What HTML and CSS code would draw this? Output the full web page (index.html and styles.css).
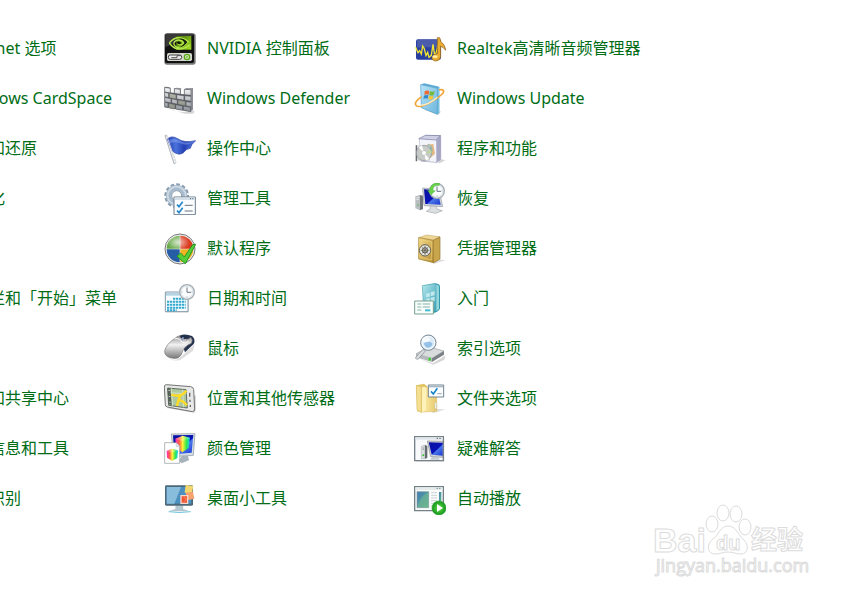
FILE: index.html
```html
<!DOCTYPE html>
<html lang="zh-CN">
<head>
<meta charset="utf-8">
<meta name="viewport" content="width=device-width, initial-scale=1">
<title>控制面板</title>
<link rel="stylesheet" href="styles.css">
</head>
<body>
<svg class="defs" aria-hidden="true">
  <defs>
    <linearGradient id="lime" x1="0" y1="0" x2="1" y2="1"><stop offset="0" stop-color="#416b08"/><stop offset="1" stop-color="#a5e322"/></linearGradient>
    <linearGradient id="metal" x1="0" y1="0" x2="0" y2="1"><stop offset="0" stop-color="#f6f6f8"/><stop offset="1" stop-color="#8b8e96"/></linearGradient>
    <linearGradient id="mouse" x1="0" y1="0" x2="0" y2="1"><stop offset="0" stop-color="#909090"/><stop offset=".4" stop-color="#f2f2f2"/><stop offset="1" stop-color="#777"/></linearGradient>
    <linearGradient id="flag" x1="0" y1="0" x2="1" y2="0"><stop offset="0" stop-color="#263fae"/><stop offset=".3" stop-color="#4a72dc"/><stop offset=".6" stop-color="#2340b4"/><stop offset="1" stop-color="#5c83e5"/></linearGradient>
    <linearGradient id="screen" x1="0" y1="0" x2="1" y2="1"><stop offset="0" stop-color="#0a12a0"/><stop offset=".55" stop-color="#0812b5"/><stop offset=".6" stop-color="#4b77ea"/><stop offset="1" stop-color="#1835cf"/></linearGradient>
    <linearGradient id="sky" x1="0" y1="0" x2="1" y2="1"><stop offset="0" stop-color="#b9e4f7"/><stop offset="1" stop-color="#6db6de"/></linearGradient>
    <linearGradient id="teal" x1="0" y1="0" x2="1" y2="1"><stop offset="0" stop-color="#b6e8ee"/><stop offset="1" stop-color="#3aa1b5"/></linearGradient>
    <linearGradient id="gold" x1="0" y1="0" x2="1" y2="1"><stop offset="0" stop-color="#f4dd91"/><stop offset="1" stop-color="#b58c32"/></linearGradient>
    <linearGradient id="folder" x1="0" y1="0" x2="1" y2="0"><stop offset="0" stop-color="#fff0b1"/><stop offset="1" stop-color="#e6c96a"/></linearGradient>
    <linearGradient id="picture" x1="0" y1="0" x2="1" y2="1"><stop offset="0" stop-color="#447bb7"/><stop offset="1" stop-color="#5ab58a"/></linearGradient>
    <linearGradient id="rainbow" x1="0" y1="0" x2="1" y2="0"><stop offset="0" stop-color="#ff31c6"/><stop offset=".25" stop-color="#ff5c42"/><stop offset=".5" stop-color="#fff337"/><stop offset=".75" stop-color="#35e94c"/><stop offset="1" stop-color="#14c9f3"/></linearGradient>
    <radialGradient id="shine"><stop offset="0" stop-color="#fff" stop-opacity=".75"/><stop offset="1" stop-color="#fff" stop-opacity="0"/></radialGradient>
    <radialGradient id="play"><stop offset="0" stop-color="#65df49"/><stop offset="1" stop-color="#13951c"/></radialGradient>
    <g id="clock"><circle r="22" fill="#e9eef1" stroke="#a6afb5" stroke-width="4"/><circle r="17" fill="#fafcfd" stroke="#c8d0d4"/><path d="M0-13V1H12" fill="none" stroke="#687681" stroke-width="3"/><path d="M0-16v3M0 13v3M-16 0h3M13 0h3" stroke="#94a2ab" stroke-width="2"/></g>
    <g id="winflag"><path d="M0 3q7-5 14-1l-2 11q-7-3-13 1z" fill="#ed6a35"/><path d="M16 3q8 3 14-1l-3 12q-6 3-13 0z" fill="#78b83a"/><path d="M-2 16q7-4 13-1l-2 10q-7-3-13 1z" fill="#2e88ce"/><path d="M13 16q7 3 13 0l-2 10q-6 3-13 0z" fill="#f8c62e"/></g>
  </defs>
</svg>

<main class="panel">
  <ul class="column clipped">
    <li><a href="#">rnet 选项</a></li>
    <li><a href="#">dows CardSpace</a></li>
    <li><a href="#">和还原</a></li>
    <li><a href="#">化</a></li>
    <li></li>
    <li><a href="#">栏和「开始」菜单</a></li>
    <li></li>
    <li><a href="#">和共享中心</a></li>
    <li><a href="#">信息和工具</a></li>
    <li><a href="#">识别</a></li>
  </ul>

  <ul class="column">
    <li><a href="#">
      <svg class="icon" viewBox="0 0 96 96"><rect x="1" y="1" width="94" height="94" rx="8" fill="#777"/><rect x="3" y="2" width="87" height="88" rx="5" fill="#111"/><path d="M4 6q0-4 5-4h75q5 0 5 4L60 17 4 43z" fill="#555" opacity=".6"/><path d="M37 9h45v41H37z" fill="url(#lime)"/><g fill="none" stroke="#b6e94d" stroke-width="4"><path d="M16 30Q40 1 73 26 50 53 34 40 24 29 37 22 53 18 59 30 49 40 42 32"/><path d="M16 30q13 19 32 18 18-2 29-13"/></g><path d="M38 19q20-8 32 9-11 14-25 16 18-10 16-17-8-11-23-8z" fill="#14200a"/><path d="M38 28q8-6 14 2-7 8-14-2z" fill="#101808"/><rect x="9" y="60" width="75" height="24" rx="5" fill="#d6d8d0"/><rect x="13" y="66" width="40" height="13" rx="6" fill="#eee" stroke="#444" stroke-width="3"/><path d="M22 74h17v-6h11" fill="none" stroke="#555" stroke-width="3"/><circle cx="69" cy="72" r="8" fill="#e8f5cb" stroke="#54a817" stroke-width="4"/><path d="M69 68v8m-4-4h8" stroke="#54a817" stroke-width="2"/></svg>
      <span>NVIDIA 控制面板</span></a></li>
    <li><a href="#">
      <svg class="icon" viewBox="0 0 96 96"><path d="M4 75q50 20 87 7l-1 9q-22 5-42-3z" fill="#bbb" opacity=".6"/><path d="M2 12l5-1 12 3v14l12 2V16l19 2v15l12 1V18l25-2v63l-10 6L2 73z" fill="#585c62"/><g fill="url(#metal)" stroke="#54595f" stroke-width="2"><path d="M2 13l17 3v14L2 27zM31 17l18 2v15l-18-3zM61 19l20 1v17l-20-2zM2 28l12 3v13L2 41zM16 31l20 4v13l-20-4zM38 35l22 3v14l-22-4zM62 38l19 2v15l-19-3zM2 43l19 4v13L2 56zM23 47l17 4v13l-17-4zM42 51l22 4v13l-22-4zM66 56l16 2v14l-16-3zM2 58l10 2v13L2 71zM14 61l19 4v13l-19-4zM35 65l21 4v13l-21-4zM58 69l22 4v13l-22-4z"/></g><path d="M16 31l20 4v13l-20-4zM42 51l22 4v13l-22-4zM14 61l19 4v13l-19-4z" fill="#858a70" opacity=".5"/><path d="M81 20l6-3v62l-5 7zM31 17l6-3 16 2-4 3zM61 19l6-4 20 2-6 3z" fill="#8d9197"/></svg>
      <span>Windows Defender</span></a></li>
    <li><a href="#">
      <svg class="icon" viewBox="0 0 96 96"><path d="M3 8l5-2 28 83-6 3z" fill="#eee" stroke="#8a929c" stroke-width="2"/><path d="M10 18Q23 6 41 17 60 31 95 23 80 35 79 46 68 46 57 60 42 69 25 54z" fill="url(#flag)" stroke="#243b9f" stroke-width="2"/><path d="M14 22q15-9 30 0 21 12 42 5-15 11-29 7-23-11-40-2z" fill="#a7c3ff" opacity=".35"/><path d="M8 7l28 83" stroke="#fff" stroke-width="2"/></svg>
      <span>操作中心</span></a></li>
    <li><a href="#">
      <svg class="icon" viewBox="0 0 96 96"><circle cx="38" cy="38" r="31" fill="none" stroke="#879bae" stroke-width="12" stroke-dasharray="10 6"/><circle cx="38" cy="38" r="24" fill="none" stroke="#a9bccd" stroke-width="16"/><circle cx="38" cy="38" r="27" fill="none" stroke="#cfdbe5" stroke-width="5"/><circle cx="38" cy="38" r="15" fill="#fff" stroke="#8297ab" stroke-width="3"/><path d="M30 42h64v53H30z" fill="#fbfdff" stroke="#6d7c8b" stroke-width="3"/><path d="M32 43h60v8H32z" fill="#d4dfe7"/><path d="M78 47h3m4 0h3" stroke="#445f80" stroke-width="3"/><path d="M39 65l6 6 11-15M39 83l6 6 11-15" fill="none" stroke="#2687c8" stroke-width="5"/><path d="M62 67h24M62 84h24" stroke="#69757e" stroke-width="3"/></svg>
      <span>管理工具</span></a></li>
    <li><a href="#">
      <svg class="icon" viewBox="0 0 96 96"><circle cx="48" cy="48" r="45" fill="#eee" stroke="#777" stroke-width="3"/><path d="M47 47V8A39 39 0 0 0 8 47z" fill="#64a744"/><path d="M49 8v39h39A39 39 0 0 0 49 8z" fill="#db3c20"/><path d="M8 49h39v39A39 39 0 0 1 8 49z" fill="#275da5"/><path d="M49 49h39a39 39 0 0 1-39 39z" fill="#f1b223"/><ellipse cx="42" cy="28" rx="34" ry="24" fill="url(#shine)"/><path d="M39 70l11-10 11 12 25-37 9-1-31 58z" fill="#54ce38" stroke="#249923" stroke-width="3"/></svg>
      <span>默认程序</span></a></li>
    <li><a href="#">
      <svg class="icon" viewBox="0 0 96 96"><path d="M6 29h68v59H6z" fill="#ccc"/><path d="M4 27h68v59H4z" fill="#fafdff" stroke="#8498a8" stroke-width="3"/><path d="M6 29h64v9H6z" fill="#b3d2e2"/><g stroke="#33a9cd" stroke-width="6" stroke-dasharray="7 2"><path d="M27 47h38M9 56h56M9 65h56M9 74h56M9 82h29"/></g><use href="#clock" x="69" y="27"/></svg>
      <span>日期和时间</span></a></li>
    <li><a href="#">
      <svg class="icon" viewBox="0 0 96 96"><path d="M6 62q18 26 38 15l48-43-5 19-38 28Q19 89 6 62z" fill="#aaa" opacity=".4"/><path d="M46 8Q63 0 84 9q12 10 5 24L63 58z" fill="#26334f"/><path d="M2 53Q7 34 31 17 42 7 52 8q10 3 14 11 10 0 14-6 8 8 2 18Q58 40 52 65 43 79 28 76 0 72 2 53z" fill="url(#mouse)" stroke="#777" stroke-width="2"/><path d="M32 17q17-2 22 10 8 8 20-2" fill="none" stroke="#fff" stroke-width="3"/><path d="M53 7q9 0 15 8l-7 4q-9-3-14-8z" fill="#202b44"/><path d="M51 20l5-9 5 3-6 9z" fill="#8198bd"/></svg>
      <span>鼠标</span></a></li>
    <li><a href="#">
      <svg class="icon" viewBox="0 0 96 96"><path d="M8 75l83 14 4-9V37z" fill="#aaa" opacity=".6"/><path d="M7 5l73 6q8 1 9 9l3 58q0 8-7 8L10 72q-6-1-6-7L1 12q0-7 6-7z" fill="#e7e8e7" stroke="#707372" stroke-width="3"/><path d="M11 15l55 5 4 55-56-8z" fill="#aec8a2" stroke="#5f6d5d" stroke-width="3"/><path d="M12 29l55 3M22 16l4 52M56 20l3 53" stroke="#d6e3c8" stroke-width="3"/><path d="M22 35q30 10 45-12M50 36q-8 13-11 33M42 51q13 0 27 16" fill="none" stroke="#ffdc23" stroke-width="7"/><path d="M10 15l9 1 4 50-9-2z" fill="#536054"/><path d="M13 22l5 1m-4 17l5 1m-4 16l5 1" stroke="#fff" stroke-width="2"/><path d="M77 29v12M78 50v7m1 9v6" stroke="#666" stroke-width="4"/></svg>
      <span>位置和其他传感器</span></a></li>
    <li><a href="#">
      <svg class="icon" viewBox="0 0 96 96"><path d="M22 3l71-1-5 65-59 4z" fill="#d6dfe6" stroke="#89919a" stroke-width="2"/><path d="M27 7l61-1-5 53-52 5z" fill="url(#screen)"/><path d="M54 68h18l3 14-22 9-9-8z" fill="#a9b3bb"/><path d="M34 17l22-9 22 6-4 31-19 13-19-14z" fill="url(#rainbow)"/><path d="M34 17l22-9 22 6-22 11z" fill="#fff" opacity=".25"/><path d="M2 29h35l10 11v51H2z" fill="#fff" stroke="#8e969b" stroke-width="2"/><path d="M37 29v12h10" fill="#e1e6e9" stroke="#9ba2a6"/><path d="M8 53l17-6 17 5-2 23-15 9-16-10z" fill="url(#rainbow)"/><path d="M8 53l17-6 17 5-17 8z" fill="#fff" opacity=".25"/></svg>
      <span>颜色管理</span></a></li>
    <li><a href="#">
      <svg class="icon" viewBox="0 0 96 96"><path d="M35 68h22v11l15 5H19l16-6z" fill="#b4c8d2" stroke="#a9b9c2"/><path d="M14 86q30 5 66 0" fill="none" stroke="#6cc3dc" stroke-width="3"/><rect x="3" y="7" width="84" height="61" rx="4" fill="#4c6878"/><path d="M8 12h74v50H8z" fill="#4c90c0"/><path d="M8 12h43L31 62H8z" fill="#88bddc"/><path d="M65 6l23 3-4 22-22-2z" fill="#f2d76e"/><path d="M65 29l22-3 4 21-21 5z" fill="#f5a26f"/><path d="M51 38h20v23H51z" fill="#ef5631" stroke="#f5d8ce" stroke-width="4"/><path d="M59 43l9 5-8 8" fill="none" stroke="#ffa080" stroke-width="2"/></svg>
      <span>桌面小工具</span></a></li>
  </ul>

  <ul class="column">
    <li><a href="#">
      <svg class="icon" viewBox="0 0 96 96"><rect x="6" y="19" width="75" height="61" rx="6" fill="#293f9f"/><path d="M9 20h67v23H9z" fill="#6170b4" opacity=".6"/><path d="M5 43l7 16 5-6 5 10 4-24 5 8 5 21 5-10 4 15 7-6 5-33 5 33 5-9 5-24 5 30" fill="none" stroke="#f4e62d" stroke-width="4"/><path d="M70 14h7l4 12q13 9 14 26-7-10-15-12v31q-2 12-14 13-14-1-12-11 3-10 16-11z" fill="#e9ac30" stroke="#8a5a18" stroke-width="2"/><ellipse cx="63" cy="71" rx="8" ry="4" fill="#fff0a3"/></svg>
      <span>Realtek高清晰音频管理器</span></a></li>
    <li><a href="#">
      <svg class="icon" viewBox="0 0 96 96"><path d="M28 80l53 5-6 10z" fill="#aaa" opacity=".4"/><path d="M20 5l10-4 46 10v78l-6 6-48-21z" fill="#5aa9d2"/><path d="M20 5l50 11v77L22 74z" fill="url(#sky)" stroke="#63abd0" stroke-width="2"/><path d="M75 13v76" stroke="#a4d8ee" stroke-width="3"/><g transform="translate(32 22)"><use href="#winflag"/></g><path d="M23 41Q-3 59 7 68q15 8 52-16 35-22 29-29-3-5-13-2" fill="none" stroke="#f3a438" stroke-width="5"/><path d="M10 67q30 3 60-24" fill="none" stroke="#fff2cc" stroke-width="4"/></svg>
      <span>Windows Update</span></a></li>
    <li><a href="#">
      <svg class="icon" viewBox="0 0 96 96"><path d="M76 77l18 5-20 10z" fill="#aaa" opacity=".5"/><path d="M17 18l20-11 43 1v70l-10 10-50-4z" fill="#c8c9df" stroke="#8585aa" stroke-width="2"/><path d="M17 18l50 4v65l-50-4z" fill="#f3f3fa"/><path d="M67 22L78 9v70L68 88z" fill="#a5a6c4"/><path d="M14 17l20-10 45 1-14 13z" fill="#cfcfe6" stroke="#8183a4" stroke-width="2"/><path d="M38 35l20-2 5 29-18 16z" fill="#e7b780"/><path d="M41 36q16 7 7 29" fill="none" stroke="#90b9ab" stroke-width="9"/><rect x="6" y="37" width="42" height="46" fill="#caceca" opacity=".8"/><path d="M7 37v48" stroke="#676971" stroke-width="4"/><circle cx="30" cy="60" r="23" fill="#c6cbc7" stroke="#8c8f9c" stroke-width="2"/><path d="M30 60L14 43l10-6zM30 60l16 17-10 6z" fill="#fff"/><path d="M30 60l22-10 1 11z" fill="#bbd59b"/><circle cx="30" cy="60" r="7" fill="#fff" stroke="#999"/></svg>
      <span>程序和功能</span></a></li>
    <li><a href="#">
      <svg class="icon" viewBox="0 0 96 96"><path d="M4 40l14-4v46l-14-6z" fill="#b8bdc1"/><path d="M18 36l9 2v40l-9 4z" fill="#70767b"/><path d="M7 45l8-2M7 50l8-2" stroke="#fff" stroke-width="2"/><circle cx="12" cy="66" r="2" fill="#35bb34"/><path d="M26 15l49 4 11 52-56-3z" fill="#d3d7db" stroke="#929aa1" stroke-width="2"/><path d="M30 19l41 3 9 43-46-2z" fill="url(#screen)"/><path d="M48 69l18 1 4 9 15 4-20 8-28-6 12-8z" fill="#dcdfe1" stroke="#a1a8ad" stroke-width="2"/><use href="#clock" x="69" y="24"/><path d="M47 24q0-25 29-24v7q-20-2-19 16h7L51 35 40 22z" fill="#69d349" stroke="#2e9e2a"/></svg>
      <span>恢复</span></a></li>
    <li><a href="#">
      <svg class="icon" viewBox="0 0 96 96"><path d="M53 76l42 6-35 10z" fill="#bbb" opacity=".5"/><path d="M14 14l23-8 41 5-20 10z" fill="#efd895" stroke="#987727"/><path d="M14 14l44 8v67l-44-11z" fill="url(#gold)" stroke="#a27e2a" stroke-width="2"/><path d="M58 22l20-10v66L58 90z" fill="#c9a64c" stroke="#94722a" stroke-width="2"/><path d="M18 20l35 7v54l-35-8z" fill="none" stroke="#efcf70" stroke-width="2"/><circle cx="33" cy="52" r="17" fill="#e6e6e2" stroke="#696656" stroke-width="3"/><circle cx="33" cy="52" r="8" fill="#c9c8be" stroke="#5f5c4b" stroke-width="3"/><path d="M33 38v28M20 52h26M23 42l20 20M43 42L23 62" stroke="#5c5a4e" stroke-width="2"/></svg>
      <span>凭据管理器</span></a></li>
    <li><a href="#">
      <svg class="icon" viewBox="0 0 96 96"><path d="M28 8l35-7 10 2q5 2 5 8v66q-4 8-15 12l-25 3z" fill="#2f9bac"/><path d="M25 8l35-6q6 0 7 5v75l-38 2z" fill="url(#teal)" stroke="#54a8b3" stroke-width="2"/><path d="M67 5q8-1 8 7v66l-8 6" fill="#94d6dc"/><path d="M37 32l10-3v12l-10 2zM50 28l12-4v13l-12 3zM37 47l10-2v12l-10 1zM50 44l12-3v13l-12 2z" fill="#e3fafa" opacity=".7"/><path d="M2 54h56v39H2z" fill="#f8fffb" stroke="#7b9e91" stroke-width="3"/><path d="M10 63h12M26 63h23M10 72h12M26 72h22M10 81h12" stroke="#86aeaa" stroke-width="3"/><path d="M33 79h16v6H33z" fill="#43bad3"/></svg>
      <span>入门</span></a></li>
    <li><a href="#">
      <svg class="icon" viewBox="0 0 96 96"><path d="M12 75l45 16 38-24-4 13-33 15z" fill="#999" opacity=".4"/><path d="M6 62l40-20 44 12-36 22z" fill="#d9dcdd" stroke="#9ea4a9" stroke-width="2"/><path d="M6 62l48 14v11L6 73z" fill="#b4babc"/><path d="M54 76l36-22v11L54 87z" fill="#7b8286"/><path d="M47 74v9" stroke="#36d529" stroke-width="7"/><path d="M27 49l6 6-19 22q-8 5-9-4z" fill="#d9dde0" stroke="#777f86" stroke-width="2"/><circle cx="43" cy="29" r="23" fill="#c2def3" stroke="#7b8790" stroke-width="3"/><circle cx="43" cy="29" r="19" fill="#dbecf8" stroke="#fff" stroke-width="3"/><path d="M29 32q12-16 27 0-7 16-20 11z" fill="#94bfe6"/><ellipse cx="36" cy="20" rx="12" ry="8" fill="#fff" opacity=".75"/></svg>
      <span>索引选项</span></a></li>
    <li><a href="#">
      <svg class="icon" viewBox="0 0 96 96"><path d="M48 77l46 2-37 12z" fill="#bbb" opacity=".5"/><path d="M7 7l23-5 9 7v72l-29 5z" fill="#e3c462"/><path d="M22 10l46 5v70l-46 2z" fill="url(#folder)" stroke="#dcc06a" stroke-width="2"/><path d="M7 7l15 5v77L9 80z" fill="#f5df91" stroke="#d8bc62" stroke-width="2"/><path d="M25 15l11-2v67l-12 8z" fill="#fff2b9"/><path d="M62 61q3-7 6 0v15l-6 3z" fill="#edf6f6" stroke="#b79f55"/><path d="M43 6h46v36H43z" fill="#fbfdfe" stroke="#718390" stroke-width="3"/><path d="M44 11h44" stroke="#a4b9c7" stroke-width="4"/><path d="M51 25l7 8 12-17" fill="none" stroke="#1785c7" stroke-width="5"/><path d="M70 32h13" stroke="#96a3ad" stroke-width="3"/></svg>
      <span>文件夹选项</span></a></li>
    <li><a href="#">
      <svg class="icon" viewBox="0 0 96 96"><path d="M6 14h85v72H6z" fill="#bbb" opacity=".5"/><path d="M2 11h86v72H2z" fill="#f9fafb" stroke="#77818a" stroke-width="4"/><path d="M4 13h82v7H4z" fill="#dfe5e9"/><path d="M68 16h4m4 0h4" stroke="#506073" stroke-width="3"/><path d="M22 40l11-4v41H22z" fill="#dce0e2" stroke="#7b8286"/><path d="M33 36l7 3v36l-7 2z" fill="#646b70"/><path d="M26 45h4M26 49h4" stroke="#777" stroke-width="2"/><circle cx="28" cy="67" r="3" fill="#32c02d"/><path d="M40 24l46 1v48l-36-2z" fill="#d0d7dc" stroke="#888" stroke-width="2"/><path d="M44 28l42 1v39l-33-3z" fill="url(#screen)"/><path d="M54 72l20 1 3 7H48z" fill="#c4cbcf"/></svg>
      <span>疑难解答</span></a></li>
    <li><a href="#">
      <svg class="icon" viewBox="0 0 96 96"><path d="M2 11h86v72H2z" fill="#fafcfc" stroke="#757f86" stroke-width="4"/><path d="M4 13h82v8H4z" fill="#e5eaeb"/><path d="M68 16h3m5 0h3" stroke="#526572" stroke-width="3"/><path d="M9 26h35v48H9z" fill="url(#picture)" stroke="#879aa0" stroke-width="2"/><path d="M10 70Q19 38 43 27v46H10z" fill="#7bbd8e" opacity=".5"/><path d="M51 29h18M51 37h18M51 45h18M51 53h18M51 61h11M51 69h8" stroke="#b6bdbd" stroke-width="2"/><path d="M75 27h7v27h-7z" fill="url(#picture)"/><circle cx="75" cy="75" r="21" fill="url(#play)" stroke="#259e2a" stroke-width="2"/><path d="M69 63l18 12-18 12z" fill="#fff"/></svg>
      <span>自动播放</span></a></li>
  </ul>
</main>

<svg class="watermark" viewBox="0 0 156 76" role="img" aria-label="Baidu 经验">
  <g class="outline">
    <ellipse cx="59" cy="23" rx="6" ry="8"/>
    <ellipse cx="70" cy="12" rx="6" ry="8"/>
    <ellipse cx="83" cy="13" rx="6" ry="8"/>
    <ellipse cx="92" cy="26" rx="6" ry="8"/>
    <path d="M75 25c8 0 10 9 15 13 7 6 5 15-2 15-5 0-8-2-13-2s-8 2-13 2c-8 0-9-10-2-15 6-4 7-13 15-13z"/>
    <text class="bai" x="0" y="51">Bai</text>
    <text class="du" x="63" y="49">du</text>
    <text class="cjk" x="98" y="48">经验</text>
    <text class="url" x="3" y="71">jingyan.baidu.com</text>
  </g>
</svg>
</body>
</html>
```
FILE: styles.css
```css
* {
  box-sizing: border-box;
}

body {
  margin: 0;
  min-height: 100vh;
  background: #fff;
  color: #006d16;
  font-family: "Noto Sans", "Noto Sans CJK SC", sans-serif;
  font-size: 16px;
  line-height: 24px;
  overflow: hidden;
}

.defs {
  position: absolute;
  width: 0;
  height: 0;
}

.panel {
  display: grid;
  grid-template-columns: 164px 250px 1fr;
  padding-top: 23px;
}

.column {
  margin: 0;
  padding: 0;
  list-style: none;
  white-space: nowrap;
}

.column li {
  display: flex;
  align-items: center;
  height: 50px;
}

.clipped {
  margin-left: -11px;
}

.column a {
  display: flex;
  align-items: center;
  gap: 11px;
  color: inherit;
  text-decoration: none;
}

.column a:hover {
  text-decoration: underline;
}

.icon {
  flex: none;
  width: 32px;
  height: 32px;
  margin-top: 2px;
}

.watermark {
  position: absolute;
  right: 45px;
  bottom: 20px;
  width: 156px;
  height: 76px;
}

.outline {
  fill: #fff;
  stroke: #dcdcdc;
  stroke-width: 1;
}

.bai {
  font: bold 34px "Liberation Sans", sans-serif;
}

.du {
  font: bold 20px "Liberation Sans", sans-serif;
}

.cjk {
  font: bold 26px "Noto Sans CJK SC", sans-serif;
}

.url {
  font: 18px "Open Sans", "Noto Sans", sans-serif;
}
```
